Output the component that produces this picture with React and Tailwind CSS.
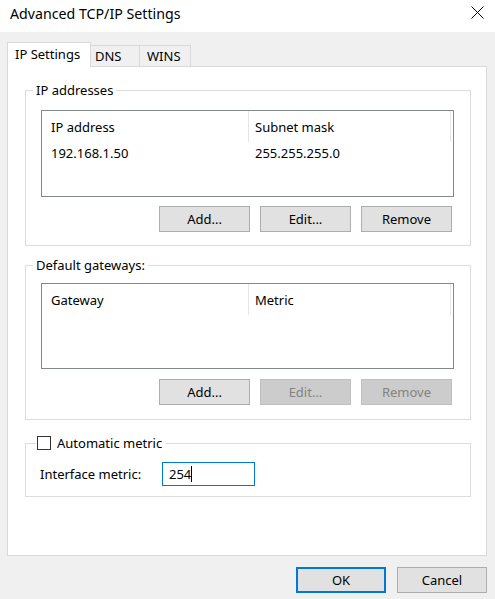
import React from 'react';

const FONT = { fontFamily: '"Noto Sans", "Liberation Sans", sans-serif' };

function Button({ children, disabled = false, primary = false, width = 'w-[91px]' }) {
    const base = `${width} h-[26px] flex items-center justify-center text-[13px] leading-none`;
    if (disabled) {
        return <div className={`${base} bg-[#cccccc] border border-[#bfbfbf] text-[#838383]`}>{children}</div>;
    }
    if (primary) {
        return <div className={`${base} bg-[#e1e1e1] border-2 border-[#0078d7] text-black`}>{children}</div>;
    }
    return <div className={`${base} bg-[#e1e1e1] border border-[#adadad] text-black`}>{children}</div>;
}

function ListBox({ cols, rows, height }) {
    return (
        <div className={`mx-[15px] w-[413px] ${height} border border-[#828790] bg-white`}>
            <div className="flex h-[31px] items-center">
                <div className="w-[207px] h-full flex items-center pl-[9px] border-r border-[#e5e5e5]">{cols[0]}</div>
                <div className="w-[202px] h-full flex items-center pl-[6px] border-r border-[#e5e5e5]">{cols[1]}</div>
            </div>
            {rows.map((r, i) => (
                <div key={i} className="flex h-[21px] items-center">
                    <div className="w-[207px] pl-[9px]">{r[0]}</div>
                    <div className="w-[202px] pl-[6px]">{r[1]}</div>
                </div>
            ))}
        </div>
    );
}

export default function App() {
    return (
        <div className="w-[495px] h-[599px] bg-[#f0f0f0] text-black text-[13px] leading-[16px] overflow-hidden" style={FONT}>

            {/* Title bar */}
            <div className="h-[32px] bg-white flex items-start justify-between pl-[10px] pr-[11px]">
                <span className="text-[14.2px] leading-[18px] pt-[5px]">Advanced TCP/IP Settings</span>
                <svg width="13" height="13" viewBox="0 0 13 13" className="mt-[6px]">
                    <path d="M0.5 0.5 L12.5 12.5 M12.5 0.5 L0.5 12.5" stroke="#000" strokeWidth="1" fill="none" />
                </svg>
            </div>

            <div className="pl-[7px] pr-[8px] pt-[10px]">
                {/* Tabs */}
                <div className="flex items-end h-[24px]">
                    <div className="relative z-10 h-[25px] -mb-px w-[84px] bg-white border border-b-0 border-[#d9d9d9] pl-[7px] pt-[3px]">IP Settings</div>
                    <div className="h-[21px] w-[49px] border-t border-r border-[#d9d9d9] pl-[4px] pt-[2px]">DNS</div>
                    <div className="h-[21px] w-[51px] border-t border-r border-[#d9d9d9] pl-[7px] pt-[2px]">WINS</div>
                </div>

                {/* Tab panel */}
                <div className="h-[490px] bg-white border border-[#d9d9d9] pl-[17px] pt-[15px]">

                    <fieldset className="w-[446px] border border-[#dcdcdc] pb-[13px]">
                        <legend className="ml-[7px] px-[3px] leading-[16px]">IP addresses</legend>
                        <div className="mt-[12px]">
                            <ListBox height="h-[87px]" cols={['IP address', 'Subnet mask']} rows={[['192.168.1.50', '255.255.255.0']]} />
                        </div>
                        <div className="mt-[9px] flex justify-end gap-[10px] pr-[18px]">
                            <Button>Add...</Button>
                            <Button>Edit...</Button>
                            <Button>Remove</Button>
                        </div>
                    </fieldset>

                    <fieldset className="mt-[11px] w-[446px] border border-[#dcdcdc] pb-[14px]">
                        <legend className="ml-[7px] px-[3px] leading-[16px]">Default gateways:</legend>
                        <div className="mt-[10px]">
                            <ListBox height="h-[86px]" cols={['Gateway', 'Metric']} rows={[]} />
                        </div>
                        <div className="mt-[10px] flex justify-end gap-[10px] pr-[18px]">
                            <Button>Add...</Button>
                            <Button disabled>Edit...</Button>
                            <Button disabled>Remove</Button>
                        </div>
                    </fieldset>

                    <fieldset className="mt-[15px] w-[446px] border border-[#dcdcdc] pb-[10px]">
                        <legend className="ml-[10px] pl-[1px] pr-[4px] flex items-center gap-[6px] leading-[16px]">
                            <span className="w-[14px] h-[14px] border border-[#333333] bg-white" />
                            <span>Automatic metric</span>
                        </legend>
                        <div className="mt-[11px] flex items-center pl-[14px]">
                            <span className="w-[122px]">Interface metric:</span>
                            <div className="w-[93px] h-[24px] border border-[#0078d7] bg-white flex items-center pl-[6px]">
                                <span>254</span>
                                <span className="w-px h-[16px] bg-black" />
                            </div>
                        </div>
                    </fieldset>
                </div>

                {/* Dialog buttons */}
                <div className="mt-[11px] flex justify-end gap-[11px]">
                    <Button primary width="w-[90px]">OK</Button>
                    <Button width="w-[90px]">Cancel</Button>
                </div>
            </div>
        </div>
    );
}
